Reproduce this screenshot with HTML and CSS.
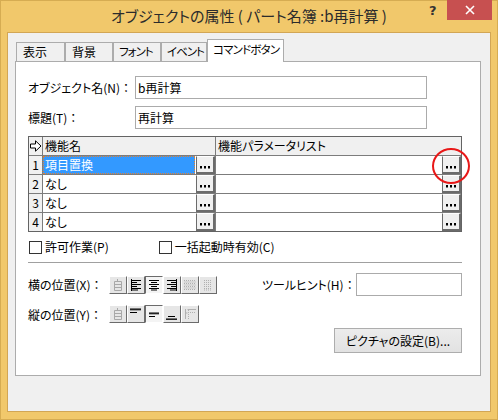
FILE: index.html
```html
<!DOCTYPE html>
<html lang="ja">
<head>
<meta charset="utf-8">
<link rel="stylesheet" href="styles.css">
</head>
<body>
<div class="window">
  <div class="titlebar">
    <div class="title">オブジェクトの属性 ( パート名簿 :b再計算 )</div>
    <div class="help">?</div>
    <div class="close"><svg width="10" height="10" viewBox="0 0 10 10"><path d="M1 1 L9 9 M9 1 L1 9" stroke="#fff" stroke-width="1.6"/></svg></div>
  </div>
  <div class="client">
    <div class="tabs">
      <div class="tab w49">表示</div>
      <div class="tab w48">背景</div>
      <div class="tab w48 kana">フォント</div>
      <div class="tab w46 kana">イベント</div>
      <div class="tab active">コマンドボタン</div>
    </div>
    <div class="panel">
      <div class="field-row">
        <div class="flabel">オブジェクト名(N)<span class="colon">：</span></div>
        <div class="input">b再計算</div>
      </div>
      <div class="field-row">
        <div class="flabel">標題(T)<span class="colon">：</span></div>
        <div class="input">再計算</div>
      </div>

      <div class="grid-wrap">
        <div class="grid">
          <div class="cell head num"><svg width="12" height="12" viewBox="0 0 12 12"><path d="M0.5 4 H5.5 V0.8 L11 6 L5.5 11.2 V8 H0.5 Z" fill="#fff" stroke="#000" stroke-width="1"/></svg></div>
          <div class="cell head">機能名</div>
          <div class="cell head">機能パラメータリスト</div>

          <div class="cell num">1</div>
          <div class="cell c2"><span class="txt sel">項目置換</span><span class="dots"><svg width="10" height="3" viewBox="0 0 10 3"><rect x="0" y="0" width="2" height="2.5"/><rect x="4" y="0" width="2" height="2.5"/><rect x="8" y="0" width="2" height="2.5"/></svg></span></div>
          <div class="cell c2"><span class="txt"></span><span class="dots"><svg width="10" height="3" viewBox="0 0 10 3"><rect x="0" y="0" width="2" height="2.5"/><rect x="4" y="0" width="2" height="2.5"/><rect x="8" y="0" width="2" height="2.5"/></svg></span></div>

          <div class="cell num">2</div>
          <div class="cell c2"><span class="txt">なし</span><span class="dots"><svg width="10" height="3" viewBox="0 0 10 3"><rect x="0" y="0" width="2" height="2.5"/><rect x="4" y="0" width="2" height="2.5"/><rect x="8" y="0" width="2" height="2.5"/></svg></span></div>
          <div class="cell c2"><span class="txt"></span><span class="dots"><svg width="10" height="3" viewBox="0 0 10 3"><rect x="0" y="0" width="2" height="2.5"/><rect x="4" y="0" width="2" height="2.5"/><rect x="8" y="0" width="2" height="2.5"/></svg></span></div>

          <div class="cell num">3</div>
          <div class="cell c2"><span class="txt">なし</span><span class="dots"><svg width="10" height="3" viewBox="0 0 10 3"><rect x="0" y="0" width="2" height="2.5"/><rect x="4" y="0" width="2" height="2.5"/><rect x="8" y="0" width="2" height="2.5"/></svg></span></div>
          <div class="cell c2"><span class="txt"></span><span class="dots"><svg width="10" height="3" viewBox="0 0 10 3"><rect x="0" y="0" width="2" height="2.5"/><rect x="4" y="0" width="2" height="2.5"/><rect x="8" y="0" width="2" height="2.5"/></svg></span></div>

          <div class="cell num">4</div>
          <div class="cell c2"><span class="txt">なし</span><span class="dots"><svg width="10" height="3" viewBox="0 0 10 3"><rect x="0" y="0" width="2" height="2.5"/><rect x="4" y="0" width="2" height="2.5"/><rect x="8" y="0" width="2" height="2.5"/></svg></span></div>
          <div class="cell c2"><span class="txt"></span><span class="dots"><svg width="10" height="3" viewBox="0 0 10 3"><rect x="0" y="0" width="2" height="2.5"/><rect x="4" y="0" width="2" height="2.5"/><rect x="8" y="0" width="2" height="2.5"/></svg></span></div>
        </div>
        <div class="circle"></div>
      </div>

      <div class="checks">
        <div class="check"><span class="box"></span>許可作業(P)</div>
        <div class="check second"><span class="box"></span>一括起動時有効(C)</div>
      </div>

      <div class="sep"></div>

      <div class="pos-row first">
        <div class="plabel">横の位置(X)<span class="colon">：</span></div>
        <div class="btns">
          <div class="tb"><svg width="12" height="12" viewBox="0 0 12 12" fill="none" stroke="#a8a8a8"><path d="M5.5 0 V2.5 M2.5 2.5 H9.5 V11.5 H2.5 Z M2.5 5.5 H9.5 M2.5 8.5 H9.5"/></svg></div>
          <div class="tb"><svg width="12" height="12" viewBox="0 0 12 12" fill="none" stroke="#000"><path d="M1.5 0 V12 M1.5 1.5 H11 M1.5 3.5 H7 M1.5 5.5 H11 M1.5 7.5 H7 M1.5 9.5 H11"/><path d="M1.5 11 H8"/></svg></div>
          <div class="tb down"><svg width="12" height="12" viewBox="0 0 12 12" fill="none" stroke="#000"><path d="M1 1.5 H11 M3 3.5 H9 M1 5.5 H11 M3 7.5 H9 M1 9.5 H11 M3 11 H9"/></svg></div>
          <div class="tb"><svg width="12" height="12" viewBox="0 0 12 12" fill="none" stroke="#000"><path d="M10.5 0 V12 M1 1.5 H10.5 M5 3.5 H10.5 M1 5.5 H10.5 M5 7.5 H10.5 M1 9.5 H10.5 M4 11 H10.5"/></svg></div>
          <div class="tb"><svg width="12" height="12" viewBox="0 0 12 12" fill="none" stroke="#b0b0b0" stroke-dasharray="1 1"><path d="M0 1.5 H12 M0 4.5 H12 M0 7.5 H12 M0 10.5 H12"/><path d="M0 3 H12 M0 6 H12 M0 9 H12" stroke-dasharray="none" stroke="#c8c8c8"/></svg></div>
          <div class="tb"><svg width="12" height="12" viewBox="0 0 12 12" fill="none" stroke="#b0b0b0"><path d="M2 1.5 H10 M2 3.5 H10 M2 5.5 H10 M2 7.5 H10 M2 9.5 H10 M2 11 H10" stroke-dasharray="1 1"/></svg></div>
        </div>
        <div class="tlabel">ツールヒント(H)<span class="colon">：</span></div>
        <div class="input tip"></div>
      </div>

      <div class="pos-row second">
        <div class="plabel">縦の位置(Y)<span class="colon">：</span></div>
        <div class="btns">
          <div class="tb"><svg width="12" height="12" viewBox="0 0 12 12" fill="none" stroke="#a8a8a8"><path d="M5.5 0 V2.5 M2.5 2.5 H9.5 V11.5 H2.5 Z M2.5 5.5 H9.5 M2.5 8.5 H9.5"/></svg></div>
          <div class="tb"><svg width="12" height="12" viewBox="0 0 12 12" fill="none" stroke="#000"><path d="M0 1 H11 M0 1.8 H11 M0 4.5 H7"/></svg></div>
          <div class="tb down"><svg width="12" height="12" viewBox="0 0 12 12" fill="none" stroke="#000"><path d="M1 5 H11 M1 5.8 H11 M1 8.5 H7"/></svg></div>
          <div class="tb"><svg width="12" height="12" viewBox="0 0 12 12" fill="none" stroke="#000"><path d="M2 8.5 H9 M0 11 H11 M0 11.8 H11"/></svg></div>
          <div class="tb"><svg width="12" height="12" viewBox="0 0 12 12" fill="none" stroke="#b0b0b0"><path d="M1.5 1 V11 M1.5 5 H3.5 M3.5 1.5 H12" /><path d="M4 4.5 H12" stroke-dasharray="1 1"/><path d="M4.5 2 V11" stroke-dasharray="1 1"/></svg></div>
        </div>
      </div>

      <div class="pic-row">
        <div class="pbtn">ピクチャの設定(B)...</div>
      </div>
    </div>
  </div>
</div>
</body>
</html>
```

FILE: styles.css
```css
* { box-sizing: border-box; }
html, body { margin: 0; padding: 0; }
body {
  width: 498px;
  height: 420px;
  overflow: hidden;
  font-family: "Noto Sans CJK JP", "Noto Sans", sans-serif;
  font-size: 12px;
  color: #000;
  font-feature-settings: "palt";
}
.window {
  width: 498px;
  height: 420px;
  background: #F1C86B;
  box-shadow: inset 0 0 0 1px #D6AC52;
  display: flex;
  flex-direction: column;
}
.titlebar {
  position: relative;
  height: 32px;
  flex: none;
}
.title {
  text-align: center;
  font-size: 15px;
  line-height: 20px;
  padding-top: 6px;
  color: #2b2b2b;
}
.help {
  position: absolute;
  left: 429px;
  top: 3px;
  font-family: "DejaVu Sans", sans-serif;
  font-weight: bold;
  font-size: 13px;
  color: #333;
}
.close {
  position: absolute;
  left: 447px;
  top: 0;
  width: 45px;
  height: 20px;
  background: #C75050;
  display: flex;
  align-items: center;
  justify-content: center;
}
.client {
  margin: 0 7px;
  height: 380px;
  border: 1px solid #D2A655;
  background: #F0F0F0;
  padding: 6px 9px 0 7px;
}
.tabs {
  display: flex;
  align-items: flex-end;
  height: 22px;
  margin-left: 1px;
}
.tab {
  height: 19px;
  border: 1px solid #ACACAC;
  border-bottom: none;
  background: #F0F0F0;
  padding-left: 6px;
  line-height: 17px;
  color: #000;
  white-space: nowrap;
  overflow: hidden;
  font-size: 12px;
}
.tab.kana { font-size: 11.5px; letter-spacing: -1px; padding-left: 5px; }
.w49 { width: 49px; }
.w48 { width: 48px; }
.w46 { width: 46px; }
.tab.active {
  width: 77px;
  height: 23px;
  margin-bottom: -1px;
  background: #fff;
  position: relative;
  z-index: 1;
  padding-left: 5px;
  line-height: 19px;
  font-size: 11.5px;
  letter-spacing: -0.8px;
  overflow: visible;
}
.colon { font-feature-settings: normal; }
.panel {
  height: 315px;
  border: 1px solid #ACACAC;
  background: #fff;
  padding: 14px 18px 0 12px;
}
.field-row {
  display: flex;
  align-items: center;
  height: 23px;
  margin-bottom: 7px;
}
.flabel { width: 107px; white-space: nowrap; }
.input {
  width: 292px;
  height: 23px;
  border: 1px solid #ABABAB;
  background: #fff;
  padding-left: 2px;
  line-height: 21px;
}
.grid-wrap { position: relative; }
.grid {
  display: grid;
  grid-template-columns: 13px 172px 245px;
  grid-auto-rows: 18px;
  gap: 1px;
  background: #7c7c7c;
  border: 1px solid #646464;
  width: 434px;
}
.cell {
  background: #fff;
  line-height: 18px;
  padding-left: 2px;
  white-space: nowrap;
  overflow: hidden;
}
.cell.head { background: #F0F0F0; padding-left: 2px; }
.cell.num {
  background: #F0F0F0;
  padding-left: 0;
  text-align: center;
  display: flex;
  align-items: center;
  justify-content: center;
}
.cell.c2 {
  display: flex;
  padding-left: 0;
}
.txt { flex: 1; padding-left: 2px; }
.txt.sel {
  background: #3399FF;
  color: #fff;
  outline: 1px dotted #E08030;
  outline-offset: -1px;
  margin-right: 1px;
}
.dots {
  width: 19px;
  flex: none;
  background: #F0F0F0;
  border-left: 1px solid #6b6b6b;
  border-right: 2px solid #6b6b6b;
  border-bottom: 2px solid #6b6b6b;
  border-top: 1px solid #fff;
  display: flex;
  justify-content: center;
  align-items: flex-end;
  padding-bottom: 3px;
}
.dots svg { fill: #000; display: block; }
.circle {
  position: absolute;
  left: 404px;
  top: 12px;
  width: 38px;
  height: 36px;
  border: 2px solid #E81818;
  border-radius: 50%;
}
.checks {
  display: flex;
  align-items: center;
  height: 14px;
  margin-top: 8px;
}
.check {
  display: flex;
  align-items: center;
  line-height: 14px;
  white-space: nowrap;
}
.check.second { margin-left: 49px; }
.box {
  width: 13px;
  height: 13px;
  border: 1px solid #333;
  background: #fff;
  margin-left: 1px;
  margin-right: 3px;
}
.sep {
  height: 1px;
  background: #A0A0A0;
  margin-top: 8px;
  width: 434px;
}
.pos-row {
  display: flex;
  align-items: center;
}
.pos-row.first { height: 23px; margin-top: 10px; }
.pos-row.second { height: 18px; margin-top: 9px; }
.plabel { width: 81px; white-space: nowrap; }
.btns { display: flex; }
.tb {
  width: 18px;
  height: 18px;
  background: #E6E6E6;
  border-top: 1px solid #fff;
  border-left: 1px solid #fff;
  border-right: 1px solid #6b6b6b;
  border-bottom: 1px solid #6b6b6b;
  display: flex;
  align-items: center;
  justify-content: center;
}
.tb svg { display: block; }
.tb.down {
  background: #F4F4F4;
  border-top: 1px solid #6b6b6b;
  border-left: 1px solid #6b6b6b;
  border-right: 1px solid #fff;
  border-bottom: 1px solid #fff;
}
.tlabel { margin-left: 45px; width: 94px; white-space: nowrap; }
.input.tip { width: 106px; }
.pic-row {
  display: flex;
  justify-content: flex-end;
  width: 434px;
  margin-top: 5px;
}
.pbtn {
  width: 128px;
  height: 25px;
  border: 1px solid #ADADAD;
  background: linear-gradient(#ECECEC, #E2E2E2);
  text-align: center;
  line-height: 23px;
}
```
